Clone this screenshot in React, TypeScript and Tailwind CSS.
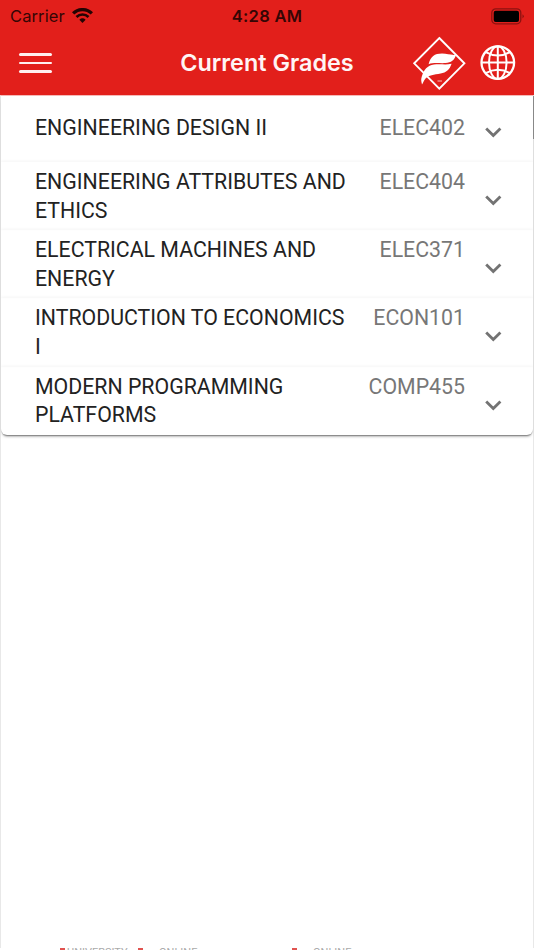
interface Course {
  title: string
  code: string
}

const courses: Course[] = [
  { title: 'ENGINEERING DESIGN II', code: 'ELEC402' },
  { title: 'ENGINEERING ATTRIBUTES AND ETHICS', code: 'ELEC404' },
  { title: 'ELECTRICAL MACHINES AND ENERGY', code: 'ELEC371' },
  { title: 'INTRODUCTION TO ECONOMICS I', code: 'ECON101' },
  { title: 'MODERN PROGRAMMING PLATFORMS', code: 'COMP455' },
]

function WifiIcon() {
  return (
    <svg width="21" height="16" viewBox="0 0 22 16" fill="none" stroke="#240403">
      <path d="M1.2 5.3a14 14 0 0 1 19.6 0" strokeWidth="3.4" />
      <path d="M4.7 9a9 9 0 0 1 12.6 0" strokeWidth="2.8" />
      <path d="M7.7 12a4.8 4.8 0 0 1 6.6 0L11 15.4z" fill="#240403" stroke="none" />
    </svg>
  )
}

function BatteryIcon() {
  return (
    <svg width="34" height="17" viewBox="0 0 34 17">
      <rect x="0.8" y="0.8" width="29" height="15" rx="4" fill="none" stroke="#8c1210" strokeWidth="1.3" />
      <rect x="2.7" y="2.7" width="25.3" height="11.2" rx="2" fill="#000" />
      <path d="M31.5 6.2q2.6 2.1 0 4.4z" fill="#8c1210" />
    </svg>
  )
}

function LogoIcon() {
  return (
    <svg width="54" height="54" viewBox="0 0 54 54">
      <path d="M27.3 2 52.4 27.3 27.3 52.6 2.2 27.3z" fill="none" stroke="#fff" strokeWidth="1.9" />
      <path d="M16.600 28.300C18.600 20.500 22.500 17.600 30 17.600c5.500 0 8.500 1.700 14 1.200-1.500 5.500-4.800 7.900-10.500 8.300-6.500.4-12-.9-16.900 1.200z" fill="#fff" />
      <path d="M10 48.500c-.9-3.500-1.100-4.900-.2-7.900 1.900-6.600 5.600-11.100 12.200-12 6.100-.9 11.400.6 17.600-.8-2 5.900-5.300 8.800-11 9.800-6.500 1.200-12 1.500-15.300 5.200-1.700 1.900-1.700 3.700-3.300 5.700z" fill="#fff" />
      <path d="M25.500 45h4.500" stroke="#f29a97" strokeWidth="1.300" />
    </svg>
  )
}

function GlobeIcon() {
  return (
    <svg width="36" height="36" viewBox="0 0 36 36" fill="none" stroke="#fff" strokeWidth="2">
      <circle cx="17.800" cy="17.600" r="16.300" strokeWidth="2.300" />
      <ellipse cx="17.800" cy="17.600" rx="8.800" ry="16.300" />
      <path d="M17.800 1.500v32.500M1.500 17.600h32.500" />
      <path d="M5.700 7.100q12.100 6.800 24.200 0M5.700 28.200q12.100-6.800 24.200 0" />
    </svg>
  )
}

function CourseRow({ title, code }: Course) {
  return (
    <div className="group flex min-h-[68.200px] pt-[1px] shadow-[0_-1px_3px_rgba(0,0,0,0.045)] first:min-h-[66px] first:pt-[13px] first:shadow-none">
      <div className="mr-[8px] ml-[34px] w-[316px] pt-[5px] text-[21.300px] leading-[28.500px] text-[#222]">{title}</div>
      <div className="w-[106px] pt-[5px] text-right text-[21.300px] leading-[28.500px] text-[#777]">{code}</div>
      <svg className="mt-[32px] ml-[20px] group-first:mt-[18px]" width="17" height="12" viewBox="0 0 17 12" fill="none" stroke="#737373" strokeWidth="2.800">
        <path d="M1.200 1.500 8.300 8.600l7.100-7.100" />
      </svg>
    </div>
  )
}

export default function App() {
  return (
    <div className="relative flex h-[950px] w-[534px] flex-col overflow-hidden bg-white font-['Roboto',sans-serif]">
      <header className="h-[95px] shrink-0 bg-[#e21f1b] font-['Inter',sans-serif]">
        <div className="grid h-[32px] grid-cols-3 items-center text-[#350605]">
          <div className="flex items-center gap-[7px] pl-[10px] text-[16.500px]">
            <span className="tracking-[0.1px]">Carrier</span>
            <WifiIcon />
          </div>
          <span className="text-center text-[16.500px] font-semibold tracking-[0.3px]">4:28 AM</span>
          <div className="flex justify-end pr-[9px]">
            <BatteryIcon />
          </div>
        </div>
        <div className="flex h-[63px] items-center pb-[1px]">
          <button aria-label="Menu" className="ml-[19px] flex w-[33px] flex-col gap-[5.500px]">
            <span className="h-[2.700px] rounded-full bg-[#fff0f0]" />
            <span className="h-[2.700px] rounded-full bg-[#fff0f0]" />
            <span className="h-[2.700px] rounded-full bg-[#fff0f0]" />
          </button>
          <h1 className="ml-[127px] w-[176px] text-center text-[23.400px] font-semibold whitespace-nowrap text-[#fff5f5]">Current Grades</h1>
          <div className="ml-[57px] flex items-center gap-[14px]">
            <LogoIcon />
            <GlobeIcon />
          </div>
        </div>
      </header>

      <main className="flex-1 border-x border-t border-x-[#e8e8e8] border-t-[#f6b9b7]">
        <div className="overflow-hidden rounded-b-[6px] shadow-[0_3px_3px_-2px_rgba(0,0,0,0.5),0_1px_1px_rgba(0,0,0,0.2)]">
          {courses.map(c => (
            <CourseRow key={c.code} title={c.title} code={c.code} />
          ))}
        </div>
      </main>

      {/* top edge of the next section, mostly below the fold */}
      <div className="flex h-[2px] shrink-0 overflow-hidden text-[11px] leading-[9px] text-[#aaa]">
        <span className="ml-[60px] h-[2px] w-[5px] bg-[#e05350]" />
        <span className="ml-[2px] w-[71px]">UNIVERSITY</span>
        <span className="h-[2px] w-[5px] bg-[#e05350]" />
        <span className="ml-[16px] w-[133px]">ONLINE</span>
        <span className="h-[2px] w-[5px] bg-[#e05350]" />
        <span className="ml-[16px]">ONLINE</span>
      </div>
      <div className="absolute top-[96px] right-0 h-[43px] w-px bg-[#888]" />
    </div>
  )
}
